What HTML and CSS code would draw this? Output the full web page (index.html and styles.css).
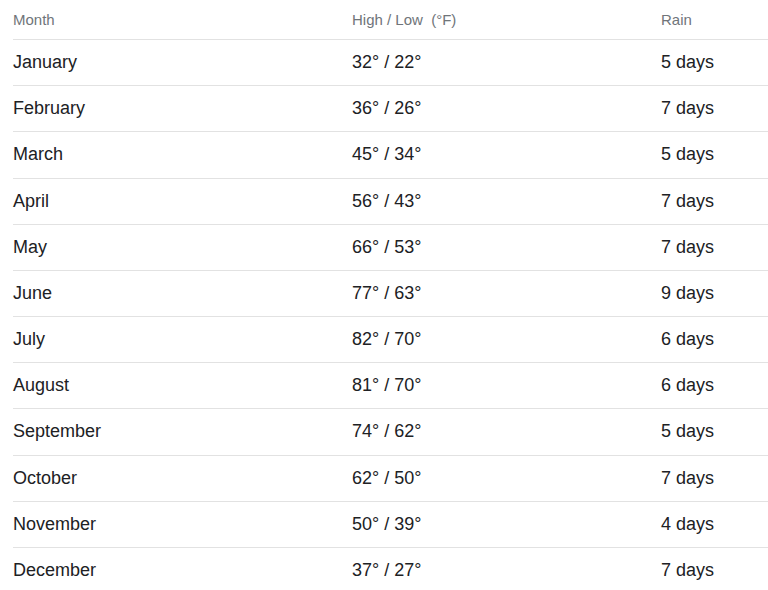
FILE: index.html
```html
<!DOCTYPE html>
<html>
<head>
<meta charset="utf-8">
<link rel="stylesheet" href="styles.css">
</head>
<body>
<div class="table">
  <div class="row head">
    <div class="cell">Month</div>
    <div class="cell">High / Low&nbsp; (°F)</div>
    <div class="cell">Rain</div>
  </div>
  <div class="row"><div class="cell">January</div><div class="cell">32° / 22°</div><div class="cell">5 days</div></div>
  <div class="row"><div class="cell">February</div><div class="cell">36° / 26°</div><div class="cell">7 days</div></div>
  <div class="row"><div class="cell">March</div><div class="cell">45° / 34°</div><div class="cell">5 days</div></div>
  <div class="row"><div class="cell">April</div><div class="cell">56° / 43°</div><div class="cell">7 days</div></div>
  <div class="row"><div class="cell">May</div><div class="cell">66° / 53°</div><div class="cell">7 days</div></div>
  <div class="row"><div class="cell">June</div><div class="cell">77° / 63°</div><div class="cell">9 days</div></div>
  <div class="row"><div class="cell">July</div><div class="cell">82° / 70°</div><div class="cell">6 days</div></div>
  <div class="row"><div class="cell">August</div><div class="cell">81° / 70°</div><div class="cell">6 days</div></div>
  <div class="row"><div class="cell">September</div><div class="cell">74° / 62°</div><div class="cell">5 days</div></div>
  <div class="row"><div class="cell">October</div><div class="cell">62° / 50°</div><div class="cell">7 days</div></div>
  <div class="row"><div class="cell">November</div><div class="cell">50° / 39°</div><div class="cell">4 days</div></div>
  <div class="row last"><div class="cell">December</div><div class="cell">37° / 27°</div><div class="cell">7 days</div></div>
</div>
</body>
</html>
```
FILE: styles.css
```css
html, body {
  margin: 0;
  padding: 0;
  background: #ffffff;
}
body {
  font-family: "Liberation Sans", Arial, sans-serif;
  color: #202124;
  overflow: hidden;
}
.table {
  padding-left: 13px;
  display: flex;
  flex-direction: column;
}
.row {
  display: grid;
  grid-template-columns: 339px 309px 1fr;
  align-items: center;
  height: 45.18px;
  border-bottom: 1px solid #e2e2e2;
  font-size: 18px;
}
.row.head {
  height: 39px;
  font-size: 15px;
  color: #70757a;
}
.row.last {
  border-bottom: none;
}
.cell {
  white-space: nowrap;
}
```
